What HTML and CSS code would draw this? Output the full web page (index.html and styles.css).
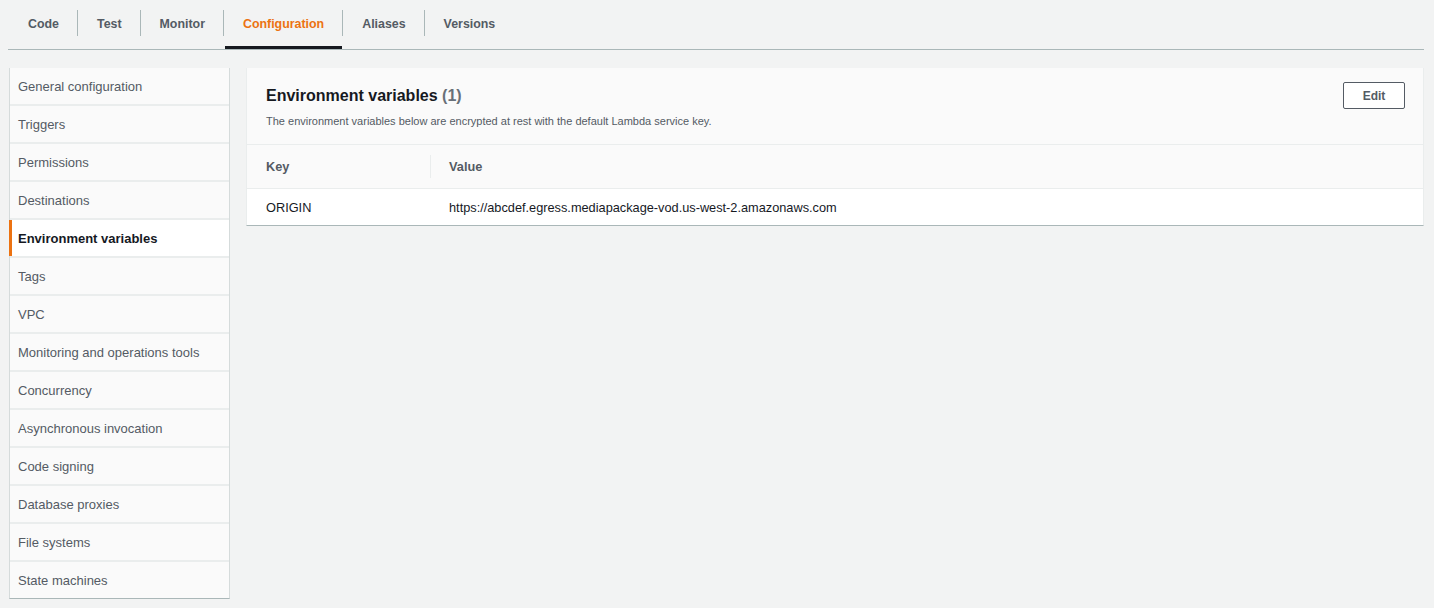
FILE: index.html
```html
<!DOCTYPE html>
<html lang="en">
<head>
<meta charset="utf-8">
<title>Configuration</title>
<link rel="stylesheet" href="styles.css">
</head>
<body>
<nav class="tabs">
  <a class="tab">Code</a>
  <a class="tab">Test</a>
  <a class="tab">Monitor</a>
  <a class="tab active">Configuration</a>
  <a class="tab">Aliases</a>
  <a class="tab">Versions</a>
</nav>
<div class="layout">
  <ul class="side">
    <li>General configuration</li>
    <li>Triggers</li>
    <li>Permissions</li>
    <li>Destinations</li>
    <li class="current">Environment variables</li>
    <li>Tags</li>
    <li>VPC</li>
    <li>Monitoring and operations tools</li>
    <li>Concurrency</li>
    <li>Asynchronous invocation</li>
    <li>Code signing</li>
    <li>Database proxies</li>
    <li>File systems</li>
    <li>State machines</li>
  </ul>
  <section class="panel">
    <header class="panel-head">
      <div class="head-text">
        <h2 class="title">Environment variables <span class="count">(1)</span></h2>
        <p class="desc">The environment variables below are encrypted at rest with the default Lambda service key.</p>
      </div>
      <button class="btn">Edit</button>
    </header>
    <div class="thead">
      <div class="c-key">Key</div>
      <div class="c-val">Value</div>
    </div>
    <div class="trow">
      <div class="c-key">ORIGIN</div>
      <div class="c-val">https://abcdef.egress.mediapackage-vod.us-west-2.amazonaws.com</div>
    </div>
  </section>
</div>
</body>
</html>
```
FILE: styles.css
```css
* { box-sizing: border-box; }
html, body { margin: 0; padding: 0; }
body {
  background: #f2f3f3;
  font-family: "Liberation Sans", Arial, sans-serif;
  color: #16191f;
  font-size: 13px;
  padding: 0 10px 0 8px;
}
.tabs {
  display: flex;
  align-items: flex-start;
  height: 50px;
  border-bottom: 1px solid #aab7b8;
  padding-top: 10px;
}
.tab {
  position: relative;
  height: 26px;
  line-height: 28px;
  padding: 0 18px 0 19px;
  font-weight: bold;
  font-size: 12.4px;
  color: #545b64;
  border-left: 1px solid #aab7b8;
}
.tab:first-child { border-left: none; padding-left: 20px; }
.tab.active { color: #ec7211; }
.tab.active::after {
  content: "";
  position: absolute;
  left: 1px;
  right: 0;
  top: 36px;
  height: 3px;
  background: #16191f;
}
.layout {
  display: flex;
  align-items: flex-start;
  gap: 16px;
  margin-top: 18px;
}
.side {
  list-style: none;
  margin: 0 0 0 1px;
  padding: 0;
  width: 221px;
  flex: none;
  background: #eaeded;
  border-left: 1px solid #d5dbdb;
  border-right: 1px solid #d5dbdb;
  border-bottom: 1px solid #aab7b8;
  display: flex;
  flex-direction: column;
  gap: 2px;
}
.side li {
  height: 36px;
  display: flex;
  align-items: center;
  padding-left: 8px;
  background: #fafafa;
  color: #545b64;
  font-size: 13px;
}
.side li.current {
  background: #ffffff;
  color: #16191f;
  font-weight: bold;
  border-left: 3px solid #ec7211;
  margin-left: -1px;
  padding-left: 6px;
}
.panel {
  flex: 1;
  background: #ffffff;
  border-left: 1px solid #eaeded;
  border-right: 1px solid #eaeded;
  border-bottom: 1px solid #aab7b8;
}
.panel-head {
  background: #fafafa;
  display: flex;
  justify-content: space-between;
  align-items: flex-start;
  padding: 16px 18px 15px 19px;
  border-bottom: 1px solid #eaeded;
}
.title {
  margin: 0;
  font-size: 16px;
  font-weight: bold;
  line-height: 24px;
  color: #16191f;
}
.count { font-weight: bold; color: #687078; }
.desc {
  margin: 5px 0 0 0;
  font-size: 11px;
  line-height: 16px;
  color: #545b64;
}
.btn {
  margin-top: -2px;
  width: 62px;
  height: 27px;
  border: 1px solid #545b64;
  border-radius: 2px;
  background: #ffffff;
  color: #545b64;
  font-family: inherit;
  font-weight: bold;
  font-size: 12px;
}
.thead, .trow {
  display: flex;
  align-items: center;
}
.thead {
  height: 44px;
  background: #fafafa;
  border-bottom: 1px solid #eaeded;
  font-weight: bold;
  color: #545b64;
  font-size: 12.75px;
}
.trow { height: 36px; color: #16191f; font-size: 12.75px; }
.c-key { width: 184px; padding-left: 19px; }
.thead .c-key { border-right: 1px solid #eaeded; height: 23px; display: flex; align-items: center; }
.c-val { padding-left: 18px; }
```
